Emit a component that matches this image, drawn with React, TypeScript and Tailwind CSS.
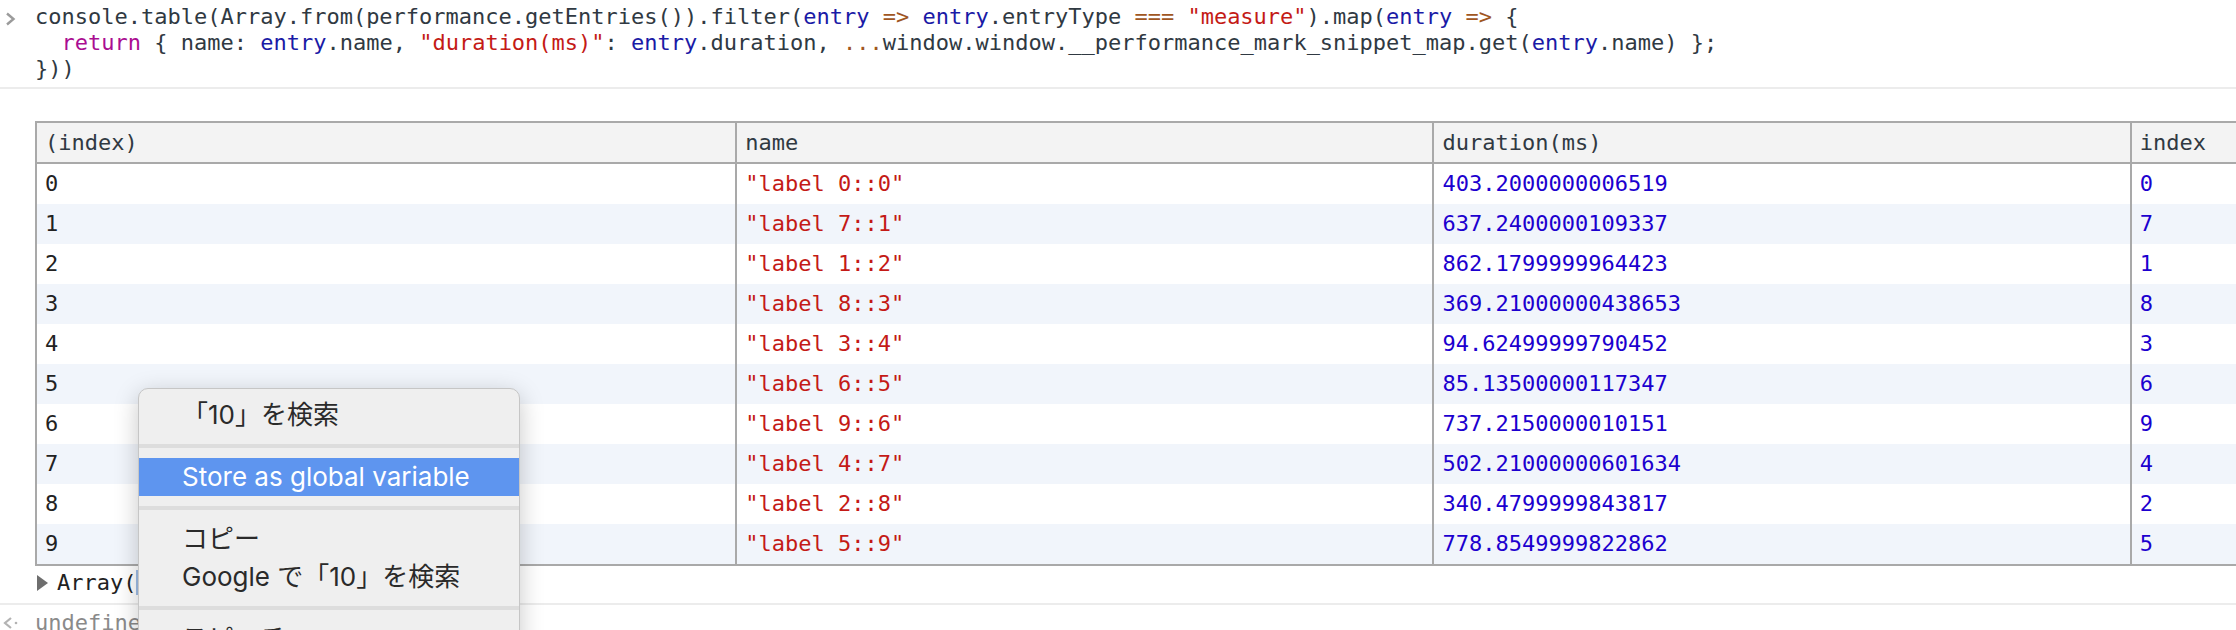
import React from 'react';

const mono = { fontFamily: '"DejaVu Sans Mono", "Liberation Mono", monospace' };

type Tok = [string, string?];

const C = {
  txt: 'text-[#303942]',
  kw: 'text-[#aa0d91]',
  v: 'text-[#1a1aa6]',
  op: 'text-[#a0561f]',
  str: 'text-[#c41a16]',
};

const lines: Tok[][] = [
  [
    ['console.table(Array.from(performance.getEntries()).filter('],
    ['entry', C.v],
    [' '],
    ['=>', C.op],
    [' '],
    ['entry', C.v],
    ['.entryType '],
    ['===', C.op],
    [' '],
    ['"measure"', C.str],
    [').map('],
    ['entry', C.v],
    [' '],
    ['=>', C.op],
    [' {'],
  ],
  [
    ['  '],
    ['return', C.kw],
    [' { name: '],
    ['entry', C.v],
    ['.name, '],
    ['"duration(ms)"', C.str],
    [': '],
    ['entry', C.v],
    ['.duration, '],
    ['...', C.op],
    ['window.window.__performance_mark_snippet_map.get('],
    ['entry', C.v],
    ['.name) };'],
  ],
  [['}))']],
];

const rows: [string, string, string, string][] = [
  ['0', 'label 0::0', '403.2000000006519', '0'],
  ['1', 'label 7::1', '637.2400000109337', '7'],
  ['2', 'label 1::2', '862.1799999964423', '1'],
  ['3', 'label 8::3', '369.21000000438653', '8'],
  ['4', 'label 3::4', '94.62499999790452', '3'],
  ['5', 'label 6::5', '85.13500000117347', '6'],
  ['6', 'label 9::6', '737.2150000010151', '9'],
  ['7', 'label 4::7', '502.21000000601634', '4'],
  ['8', 'label 2::8', '340.4799999843817', '2'],
  ['9', 'label 5::9', '778.8549999822862', '5'],
];

const ContextMenu: React.FC = () => {
  const item = 'h-[38px] flex items-center pl-[43px] pr-[30px]';
  const sep = (
    <div className="h-[24px] flex items-center">
      <div className="h-[4px] w-full bg-[#dddddd]" />
    </div>
  );
  return (
    <div
      className="absolute left-[138px] top-[388px] w-[382px] h-[320px] rounded-[10px] bg-[#efefef] border border-[#c6c6c6] shadow-[0_6px_24px_rgba(0,0,0,0.22)] pt-[7px] text-[26px] text-[#2a2a2a] overflow-hidden"
      style={{ fontFamily: 'Inter, "Noto Sans CJK JP", sans-serif' }}
    >
      <div className={item}>「10」を検索</div>
      {sep}
      <div className={`${item} bg-[#5e95ef] text-white`}>Store as global variable</div>
      {sep}
      <div className={item}>コピー</div>
      <div className={item}>Google で「10」を検索</div>
      {sep}
      <div className={`${item} justify-between`}>
        <span>スピーチ</span>
        <svg width="12" height="20" viewBox="0 0 12 20" fill="none" stroke="#3a3a3a" strokeWidth="2.4">
          <polyline points="2,2 10,10 2,18" />
        </svg>
      </div>
    </div>
  );
};

export default function App() {
  return (
    <div className="relative w-[2236px] h-[630px] overflow-hidden bg-white text-[22px] leading-[26px]" style={mono}>
      {/* input */}
      <div className="flex pt-[4px] pb-[5px] border-b-2 border-[#ececec]">
        <div className="w-[35px] shrink-0 pl-[5px] pt-[8px]">
          <svg width="11" height="14" viewBox="0 0 11 14" fill="none" stroke="#9b9b9b" strokeWidth="2.4">
            <polyline points="2,1.5 8.5,7 2,12.5" />
          </svg>
        </div>
        <div className={`whitespace-pre ${C.txt}`}>
          {lines.map((l, i) => (
            <div key={i}>
              {l.map(([t, c], j) => (
                <span key={j} className={c}>
                  {t}
                </span>
              ))}
            </div>
          ))}
        </div>
      </div>

      {/* table output */}
      <div className="pt-[32px] pb-[7px] border-b-2 border-[#ececec]">
        <table className="ml-[35px] table-fixed border-separate border-spacing-0 border-2 border-[#a9a9a9] w-[2794px]">
          <colgroup>
            <col className="w-[698px]" />
            <col className="w-[697px]" />
            <col className="w-[697px]" />
            <col className="w-[697px]" />
          </colgroup>
          <thead>
            <tr className="bg-[#f3f3f3] text-[#303942]">
              {['(index)', 'name', 'duration(ms)', 'index'].map((h, i) => (
                <th
                  key={h}
                  className={`h-[41px] p-0 pl-[8px] text-left font-normal border-b-2 border-[#a9a9a9] ${i > 0 ? 'border-l-2' : ''}`}
                >
                  {h}
                </th>
              ))}
            </tr>
          </thead>
          <tbody>
            {rows.map((r, i) => (
              <tr key={r[0]} className={i % 2 ? 'bg-[#f1f5fb]' : 'bg-white'}>
                <td className="h-[40px] p-0 pl-[8px] text-[#222]">{r[0]}</td>
                <td className="h-[40px] p-0 pl-[8px] border-l-2 border-[#a9a9a9] text-[#c41a16]">"{r[1]}"</td>
                <td className="h-[40px] p-0 pl-[8px] border-l-2 border-[#a9a9a9] text-[#1c00cf]">{r[2]}</td>
                <td className="h-[40px] p-0 pl-[8px] border-l-2 border-[#a9a9a9] text-[#1c00cf]">{r[3]}</td>
              </tr>
            ))}
          </tbody>
        </table>
        <div className="mt-[4px] flex items-center pl-[37px] text-[#222]">
          <svg width="12" height="16" viewBox="0 0 12 16" className="mr-[8px]">
            <polygon points="0,0 11,8 0,16" fill="#6e6e6e" />
          </svg>
          <span>
            Array(<span className="bg-[#9fbde6]">10</span>)
          </span>
        </div>
      </div>

      {/* result */}
      <div className="flex pt-[5px]">
        <div className="w-[35px] shrink-0 pl-[3px] pt-[7px] flex items-start">
          <svg width="16" height="12" viewBox="0 0 16 12" fill="none" stroke="#b3b3b3" strokeWidth="2.2">
            <polyline points="8,1 2,6 8,11" />
            <circle cx="13" cy="6" r="1.3" fill="#b3b3b3" stroke="none" />
          </svg>
        </div>
        <div className="text-[#8a8a8a]">undefined</div>
      </div>

      <ContextMenu />
    </div>
  );
}
